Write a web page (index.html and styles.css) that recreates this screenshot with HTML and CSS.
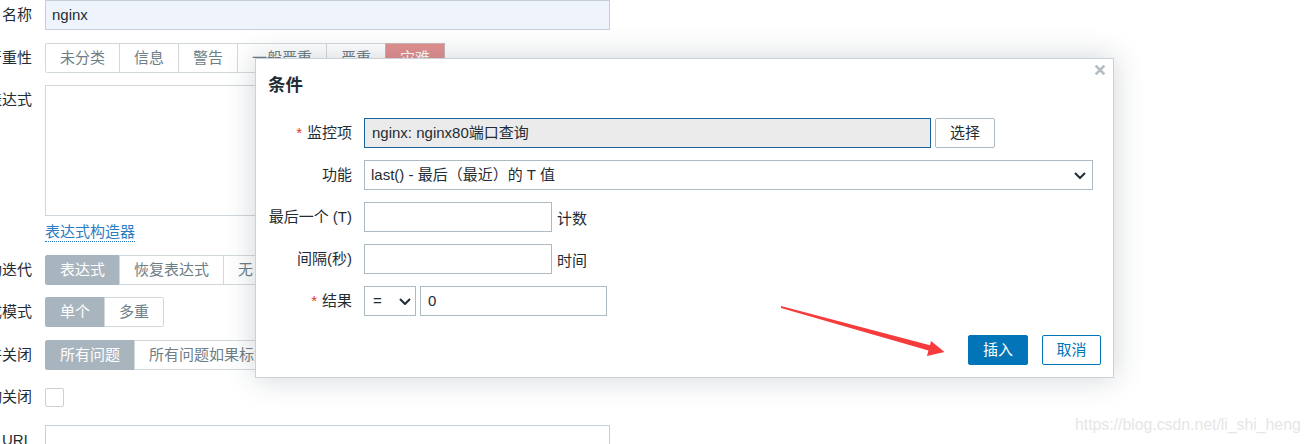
FILE: index.html
```html
<!DOCTYPE html>
<html lang="zh-CN">
<head>
<meta charset="utf-8">
<title>触发器</title>
<link rel="stylesheet" href="styles.css">
</head>
<body>
<div class="page">
  <div class="form">
    <div class="lbl">名称</div>
    <div class="cell"><div class="box name">nginx</div></div>

    <div class="lbl">严重性</div>
    <div class="cell">
      <div class="seg">
        <span class="w74">未分类</span><span>信息</span><span>警告</span><span>一般严重</span><span>严重</span><span class="disaster">灾难</span>
      </div>
    </div>

    <div class="lbl">表达式</div>
    <div class="cell">
      <div class="area"></div>
      <a class="link">表达式构造器</a>
    </div>

    <div class="lbl">OK事件成功迭代</div>
    <div class="cell">
      <div class="seg"><span class="on">表达式</span><span>恢复表达式</span><span>无</span></div>
    </div>

    <div class="lbl">问题事件生成模式</div>
    <div class="cell">
      <div class="seg"><span class="on">单个</span><span class="last">多重</span></div>
    </div>

    <div class="lbl">OK事件关闭</div>
    <div class="cell">
      <div class="seg"><span class="on">所有问题</span><span>所有问题如果标签值匹配</span></div>
    </div>

    <div class="lbl">允许手动关闭</div>
    <div class="cell"><div class="check"></div></div>

    <div class="lbl">URL</div>
    <div class="cell"><div class="box url"></div></div>
  </div>

  <div class="dialog">
    <svg class="close" width="10" height="10" viewBox="0 0 10 10"><path d="M1.5 1.5 L8.5 8.5 M8.5 1.5 L1.5 8.5" stroke="#b3bec5" stroke-width="2.6" stroke-linecap="square"/></svg>
    <div class="dlg-title">条件</div>
    <div class="dlg-form">
      <div class="dlbl"><span class="req">*</span>监控项</div>
      <div class="drow">
        <div class="inp item">nginx: nginx80端口查询</div>
        <div class="btn-alt">选择</div>
      </div>

      <div class="dlbl">功能</div>
      <div class="drow">
        <div class="inp sel func">last() - 最后（最近）的 T 值
          <svg class="chev" width="12" height="7" viewBox="0 0 12 7"><path d="M1 1 L6 6 L11 1" fill="none" stroke="#1f2c33" stroke-width="2"/></svg>
        </div>
      </div>

      <div class="dlbl">最后一个 (T)</div>
      <div class="drow"><div class="inp short"></div><span class="suffix">计数</span></div>

      <div class="dlbl">间隔(秒)</div>
      <div class="drow"><div class="inp short"></div><span class="suffix">时间</span></div>

      <div class="dlbl"><span class="req">*</span>结果</div>
      <div class="drow">
        <div class="inp sel op">=
          <svg class="chev" width="12" height="7" viewBox="0 0 12 7"><path d="M1 1 L6 6 L11 1" fill="none" stroke="#1f2c33" stroke-width="2"/></svg>
        </div>
        <div class="inp value">0</div>
      </div>
    </div>
    <div class="dlg-foot">
      <div class="btn-primary">插入</div>
      <div class="btn-cancel">取消</div>
    </div>
  </div>

  <svg class="arrow" width="180" height="65" viewBox="0 0 180 65">
    <polygon points="6,6 155,45.3 156,41 169.5,52 152,56 153.4,50.6 6,8" fill="#f53b3b"/>
  </svg>

  <div class="watermark">https://blog.csdn.net/li_shi_heng</div>
</div>
</body>
</html>
```

FILE: styles.css
```css
* { box-sizing: border-box; }

body {
  margin: 0;
  background: #fff;
  font-family: "Liberation Sans", "Noto Sans CJK SC", sans-serif;
  font-size: 15px;
  color: #1f2c33;
  overflow: hidden;
}

.page {
  position: relative;
  width: 1310px;
  height: 444px;
  overflow: hidden;
}

/* ---------- background trigger form ---------- */
.form {
  display: grid;
  grid-template-columns: 160px 565px;
  row-gap: 12.5px;
  margin-left: -115px;
}

.lbl {
  text-align: right;
  padding-right: 13px;
  line-height: 30px;
  white-space: nowrap;
}

.cell { min-height: 30px; }

.box {
  height: 30px;
  border: 1px solid #c6cfd5;
  line-height: 28px;
  padding: 0 6px;
  background: #fff;
}

.name { background: #eff4fc; }

.url { height: 40px; }

.seg {
  display: flex;
  height: 30px;
}

.seg span {
  display: block;
  height: 30px;
  line-height: 28px;
  padding: 0 14px;
  border: 1px solid #d2d9dd;
  margin-left: -1px;
  color: #6e7e87;
  background: #fff;
  white-space: nowrap;
}

.seg span:first-child {
  margin-left: 0;
  border-radius: 2px 0 0 2px;
}

.seg span.last { border-radius: 0 2px 2px 0; }

.seg span.on {
  background: #a9b5be;
  border-color: #a9b5be;
  color: #fff;
}

.seg span.disaster {
  background: #e39090;
  border-color: #c9b7b7;
  color: #fff;
}

.area {
  height: 131px;
  border: 1px solid #d0d7dc;
  background: #fff;
}

.link {
  display: inline-block;
  margin-top: 7px;
  line-height: 18px;
  color: #2a7dc4;
  border-bottom: 1px dotted #2a7dc4;
}

.check {
  width: 19px;
  height: 19px;
  margin-top: 5.5px;
  border: 1px solid #c9d1d6;
  border-radius: 2px;
  background: #fff;
}

/* ---------- dialog ---------- */
.dialog {
  position: absolute;
  left: 255px;
  top: 58px;
  width: 859px;
  height: 320px;
  background: #fff;
  border: 1px solid #c8d2d8;
  box-shadow: 0 0 28px rgba(40, 60, 75, 0.22);
  padding: 0 12px;
}

.close {
  position: absolute;
  right: 8px;
  top: 6px;
}

.dlg-title {
  font-size: 17.5px;
  font-weight: bold;
  line-height: 24px;
  padding-top: 14px;
  color: #1f2c33;
}

.dlg-form {
  margin-top: 21px;
  display: grid;
  grid-template-columns: 84px auto;
  column-gap: 12px;
  row-gap: 12px;
  align-items: center;
}

.dlbl {
  text-align: right;
  white-space: nowrap;
  line-height: 30px;
}

.req {
  color: #e33734;
  margin-right: 5px;
}

.drow {
  display: flex;
  align-items: center;
  height: 30px;
}

.inp {
  position: relative;
  height: 30px;
  border: 1px solid #acbbc2;
  background: #fff;
  line-height: 28px;
  padding: 0 7px;
  white-space: nowrap;
}

.item {
  width: 567px;
  background: #ebebeb;
  border-color: #1b6299;
}

.btn-alt {
  margin-left: 4px;
  width: 60px;
  height: 30px;
  line-height: 28px;
  text-align: center;
  border: 1px solid #acbbc2;
  border-radius: 2px;
  background: #fff;
}

.func {
  width: 729px;
  padding-left: 6px;
}

.chev {
  position: absolute;
  right: 6px;
  top: 11px;
}

.op {
  width: 52px;
  padding-left: 8px;
}

.op .chev { right: 4px; }

.short { width: 188px; }

.suffix { margin-left: 5px; }

.value {
  margin-left: 4px;
  width: 187px;
}

.dlg-foot {
  margin-top: 19px;
  display: flex;
  justify-content: flex-end;
  gap: 14px;
}

.btn-primary,
.btn-cancel {
  height: 30px;
  line-height: 28px;
  text-align: center;
  border-radius: 2px;
  border: 1px solid #0275b8;
}

.btn-primary {
  width: 60px;
  background: #0275b8;
  color: #fff;
}

.btn-cancel {
  width: 59px;
  background: #fff;
  color: #0275b8;
}

/* ---------- annotations ---------- */
.arrow {
  position: absolute;
  left: 775px;
  top: 300px;
}

.watermark {
  position: absolute;
  left: 1075px;
  top: 416px;
  font-family: "Liberation Sans", sans-serif;
  font-size: 15.8px;
  line-height: 18px;
  color: #e6e6e6;
  white-space: nowrap;
}
```
